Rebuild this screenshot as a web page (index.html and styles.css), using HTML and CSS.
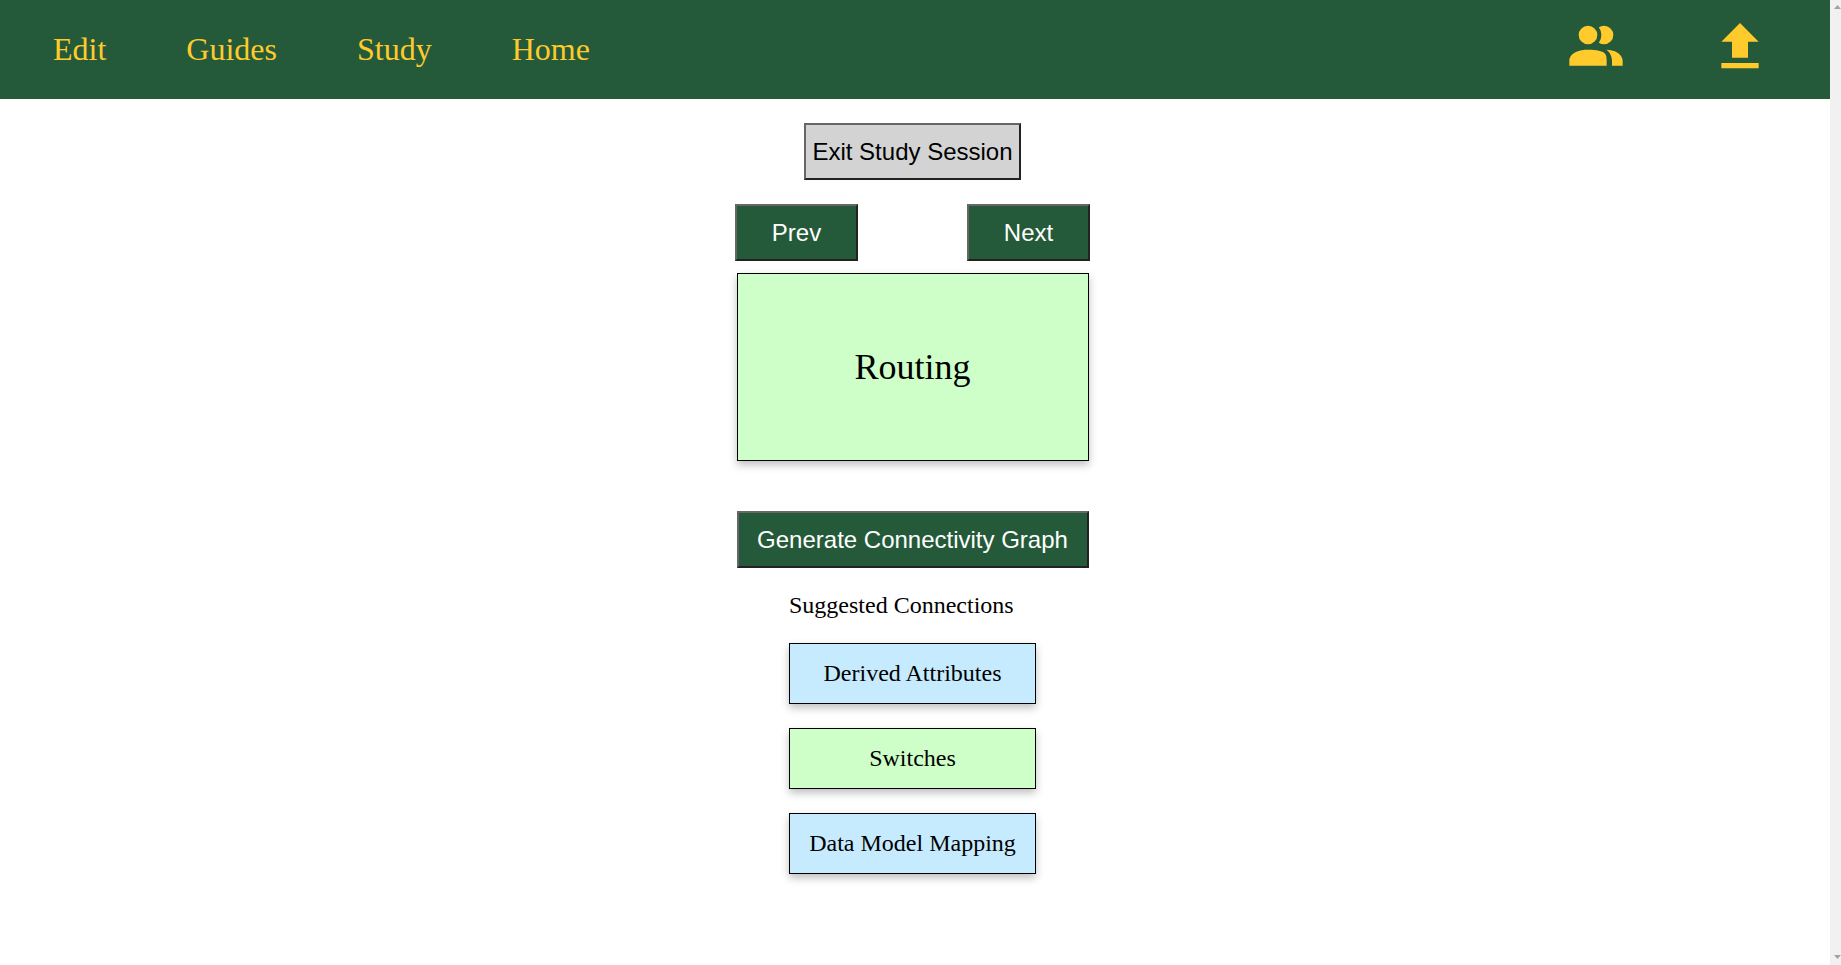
FILE: index.html
```html
<!DOCTYPE html>
<html lang="en">
<head>
    <meta charset="UTF-8">
    <meta name="viewport" content="width=device-width, initial-scale=1.0">
    <title>Study</title>
    <link rel="stylesheet" href="styles.css">
</head>
<body>
    <div class="page">
        <nav class="navbar">
            <div class="nav-links">
                <a href="#">Edit</a>
                <a href="#">Guides</a>
                <a href="#">Study</a>
                <a href="#">Home</a>
            </div>
            <div class="nav-icons">
                <svg viewBox="0 0 24 24"><path d="M16 17V19H2V17S2 13 9 13 16 15 16 17M12.5 7.5A3.5 3.5 0 1 0 9 11A3.5 3.5 0 0 0 12.5 7.5M15.94 13A5.32 5.32 0 0 1 18 17V19H22V17S22 13.37 15.94 13M15 4A3.39 3.39 0 0 0 13.07 4.59A5 5 0 0 1 13.07 10.41A3.39 3.39 0 0 0 15 11A3.5 3.5 0 0 0 15 4Z"/></svg>
                <svg viewBox="0 0 24 24"><path d="M9,16V10H5L12,3L19,10H15V16H9M5,20V18H19V20H5Z"/></svg>
            </div>
        </nav>
        <main class="study">
            <button class="btn btn-exit">Exit Study Session</button>
            <div class="card-nav">
                <button class="btn btn-green btn-nav">Prev</button>
                <button class="btn btn-green btn-nav">Next</button>
            </div>
            <div class="flashcard">Routing</div>
            <button class="btn btn-green btn-graph">Generate Connectivity Graph</button>
            <div class="suggested">
                <p>Suggested Connections</p>
                <div class="link-card blue">Derived Attributes</div>
                <div class="link-card green">Switches</div>
                <div class="link-card blue">Data Model Mapping</div>
            </div>
        </main>
    </div>
    <div class="scrollbar">
        <svg viewBox="0 0 7 4"><path d="M3.5 0L7 4H0Z"/></svg>
        <svg viewBox="0 0 7 4"><path d="M0 0H7L3.5 4Z"/></svg>
    </div>
</body>
</html>
```
FILE: styles.css
```css
* {
    margin: 0;
    padding: 0;
    box-sizing: border-box;
}
html {
    overflow: hidden;
}
body {
    display: flex;
    height: 100vh;
    font-family: "Liberation Serif", serif;
    background-color: white;
}
.page {
    flex: 1;
}
.scrollbar {
    display: flex;
    flex-direction: column;
    justify-content: space-between;
    width: 11px;
    padding: 5px 0 6px 4px;
    background-color: #f1f1f1;
}
.scrollbar svg {
    display: block;
    width: 7px;
    height: 4px;
    fill: #a3a3a3;
}
.navbar {
    display: flex;
    justify-content: space-between;
    align-items: center;
    height: 99px;
    padding: 0 58px 0 53px;
    background-color: #245a39;
}
.nav-links {
    display: flex;
    gap: 80px;
}
.nav-links a {
    font-size: 32px;
    color: #ffca2c;
    text-decoration: none;
}
.nav-icons {
    display: flex;
    gap: 80px;
    margin-bottom: 6px;
}
.nav-icons svg {
    width: 64px;
    height: 64px;
    fill: #ffca2c;
}
.study {
    display: flex;
    flex-direction: column;
    align-items: center;
    padding: 24px 5px 0 0;
}
.btn {
    height: 57px;
    font-family: "Liberation Sans", sans-serif;
    font-size: 24px;
    border: 2px solid;
    border-color: #666 #222 #222 #666;
}
.btn-exit {
    width: 217px;
    background-color: lightgray;
    color: black;
}
.btn-green {
    background-color: #245a39;
    color: white;
}
.card-nav {
    display: flex;
    justify-content: space-between;
    width: 355px;
    margin-top: 24px;
}
.btn-nav {
    width: 123px;
}
.flashcard {
    display: flex;
    justify-content: center;
    align-items: center;
    width: 352px;
    height: 188px;
    margin-top: 12px;
    font-size: 36px;
    background-color: #ceffc8;
    border: 1px solid black;
    box-shadow: 0 4px 8px rgba(0, 0, 0, 0.25);
}
.btn-graph {
    width: 352px;
    margin-top: 50px;
}
.suggested {
    display: flex;
    flex-direction: column;
    gap: 24px;
    width: 247px;
    margin-top: 24px;
}
.suggested p {
    font-size: 24px;
}
.link-card {
    display: flex;
    justify-content: center;
    align-items: center;
    height: 61px;
    font-size: 24px;
    border: 1px solid black;
    box-shadow: 0 4px 8px rgba(0, 0, 0, 0.25);
}
.blue {
    background-color: #c6ebff;
}
.green {
    background-color: #ceffc8;
}
```
